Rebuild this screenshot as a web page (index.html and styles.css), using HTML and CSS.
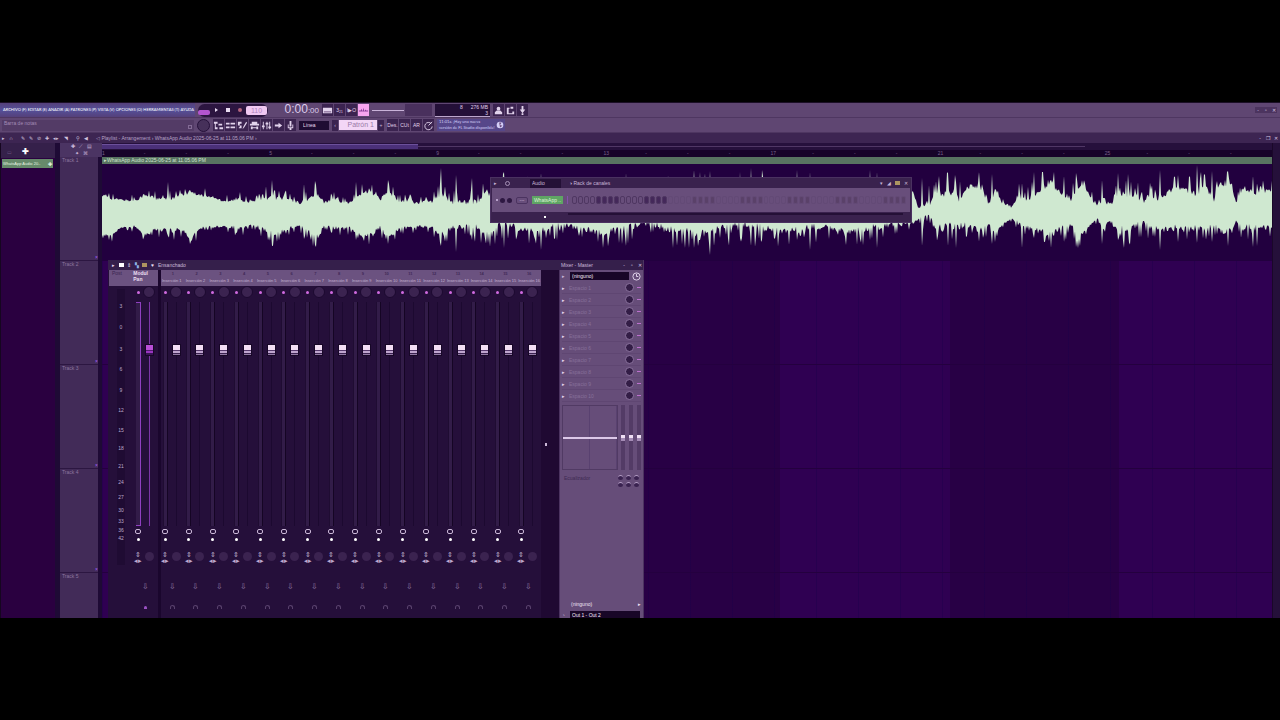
FILE: index.html
```html
<!DOCTYPE html>
<html lang="es">
<head>
<meta charset="UTF-8">
<meta name="viewport" content="width=device-width, initial-scale=1.0">
<title>Playlist - Arrangement</title>
<link rel="stylesheet" href="styles.css">
</head>
<body>

<main class="app">

  <header class="toolbar">
    <div class="bar-row">
      <nav class="menu">
        <a href="#">ARCHIVO (F)</a><a href="#">EDITAR (E)</a><a href="#">AÑADIR (A)</a><a href="#">PATRONES (P)</a><a href="#">VISTA (V)</a><a href="#">OPCIONES (O)</a><a href="#">HERRAMIENTAS (T)</a><a href="#">AYUDA</a>
      </nav>
      <div class="transport">
        <button class="song" aria-label="Song"></button>
        <button aria-label="Play"><svg viewBox="0 0 10 10"><path d="M4 3l3 2-3 2z"/></svg></button>
        <button aria-label="Stop"><svg viewBox="0 0 10 10"><path d="M3 3h4v4H3z"/></svg></button>
        <button class="rec" aria-label="Record"><svg viewBox="0 0 10 10"><circle cx="5" cy="5" r="2"/></svg></button>
        <input class="tempo" aria-label="Tempo" value="110">
      </div>
      <div class="clock"><b>0:00</b><small>:00</small></div>
      <div class="group">
        <button class="icon lit" aria-label="Teclado"><svg viewBox="0 0 12 12"><path d="M1 3h10v6H1z"/><path class="cut" d="M2 7h8v1H2z"/></svg></button>
        <button class="icon">3₂₁</button>
        <button class="icon">I▶O</button>
        <button class="icon pink" aria-label="Metrónomo"><svg viewBox="0 0 12 12"><path d="M1 6h2l1-2 1 3 1-4 1 4 1-2 1 1h2v1H1z"/></svg></button>
      </div>
      <div class="group pitch"><span class="line"></span><span class="box"></span></div>
      <div class="cpu"><span>8</span><span>276 MB<br>3</span></div>
      <div class="group">
        <button class="icon" aria-label="Usuario"><svg viewBox="0 0 12 12"><circle cx="6" cy="4" r="2"/><path d="M2 10V8l2-2h4l2 2v2z"/></svg></button>
        <button class="icon" aria-label="Afinador"><svg viewBox="0 0 12 12"><path d="M2 3h3v1H4v5h4V7h2v3H2zM6 2h3v2H6z"/></svg></button>
        <button class="icon" aria-label="Descarga"><svg viewBox="0 0 12 12"><path d="M5 1h2v4h2L6 9 3 5h2zM5 9h2v2H5z"/></svg></button>
      </div>
      <div class="window-buttons framed"><button aria-label="Minimizar">-</button><button aria-label="Maximizar">▫</button><button aria-label="Cerrar">✕</button></div>
    </div>

    <div class="bar-row second">
      <div class="hint"><span>Barra de notas</span><i></i></div>
      <span class="volume"></span>
      <div class="group">
        <button class="icon" aria-label="Playlist"><svg viewBox="0 0 12 12"><path d="M1 2h4v2H3v4h2v2H2V4H1zM6 4h4v2H6zM7 8h4v2H7z"/></svg></button>
        <button class="icon" aria-label="Rack"><svg viewBox="0 0 12 12"><path d="M1 3h4v2H1zM6 3h5v2H6zM1 7h4v2H1zM6 7h5v2H6z"/></svg></button>
        <button class="icon" aria-label="Piano roll"><svg viewBox="0 0 12 12"><path d="M1 2h4v2H3v2h2v3H2V8h1V6H1zM7 7l3-5 1 1-3 5-2 2z"/></svg></button>
        <button class="icon" aria-label="Navegador"><svg viewBox="0 0 12 12"><path d="M3 2h6v2h2v2H1V4h2zM2 7h2v3H2zM8 7h2v3H8zM4 8h4v1H4z"/></svg></button>
        <button class="icon" aria-label="Mezclador"><svg viewBox="0 0 12 12"><path d="M2 2h1v8H2zM6 2h1v8H6zM9 2h1v8H9zM1 6h3v2H1zM5 3h3v2H5zM8 7h3v2H8z"/></svg></button>
        <button class="icon" aria-label="Siguiente"><svg viewBox="0 0 12 12"><path d="M2 5h4V3l4 3-4 3V7H2z"/></svg></button>
        <button class="icon" aria-label="Micrófono"><svg viewBox="0 0 12 12"><path d="M5 1h2v6H5zM3 5h1v3h4V5h1v4H7v2H5V9H3z"/></svg></button>
      </div>
      <select class="snap" aria-label="Ajuste"><option>Línea</option></select>
      <div class="pattern"><button aria-label="Anterior">‹</button><input aria-label="Patrón" value="Patrón 1"><button aria-label="Nuevo">+</button></div>
      <div class="group">
        <button class="icon">Des.</button>
        <button class="icon">CUt</button>
        <button class="icon">AR</button>
        <button class="icon" aria-label="Tiempo"><svg viewBox="0 0 12 12"><path class="stroke" d="M9 4a4 4 0 1 0 1 3M6 6l4-4"/></svg></button>
      </div>
      <div class="news"><p>11:01a. ¡Hay una nueva<br>versión de FL Studio disponible!</p><svg viewBox="0 0 12 12"><circle cx="6" cy="6" r="4"/><path class="cut" d="M5 3h3L6 6l3 1-3 2z"/></svg></div>
    </div>
  </header>

  <section class="playlist">
    <div class="title-bar">
      <div class="tools">
        <i>▸</i><i>∩</i><i></i><i>✎</i><i>✎</i><i>⊘</i><i>✚</i><i>◂▸</i><i>◥</i><i></i><i>⚲</i><i>◀</i>
      </div>
      <h1>◁ Playlist - Arrangement › WhatsApp Audio 2025-06-25 at 11.05.06 PM ›</h1>
      <div class="window-buttons"><button aria-label="Minimizar">-</button><button aria-label="Restaurar">❐</button><button aria-label="Cerrar">✕</button></div>
    </div>

    <div class="columns">
      <aside class="picker">
        <div class="picker-head"><i>▭</i><b>✚</b></div>
        <button class="clip-item"><span>WhatsApp Audio 20..</span><b>✚</b></button>
      </aside>

      <aside class="track-heads" id="track-heads">
        <div class="head-tools"><b>✚</b><i>⟋</i><i>▤</i><br><i>✦</i><i>⌘</i></div>
      </aside>

      <div class="timeline">
        <div class="scroll-x"><span></span><em></em></div>
        <div class="ruler" id="ruler"></div>
        <div class="audio-clip">
          <div class="clip-title">▸WhatsApp Audio 2025-06-25 at 11.05.06 PM</div>
          <svg class="wave" viewBox="0 0 1170 97" preserveAspectRatio="none"><path id="wave-path"/></svg>
        </div>
        <div class="lanes"><div></div><div></div><div></div><div></div></div>
      </div>
      <div class="scroll-y"></div>
    </div>

    <section class="rack window">
      <div class="rack-title">
        <i>▸</i><i class="ring"></i>
        <select aria-label="Filtro"><option>Audio</option></select>
        <h2>◑ Rack de canales</h2>
        <div class="rack-icons"><i>▾</i><i>◢</i><i class="gold"></i><i>✕</i></div>
      </div>
      <div class="channel">
        <i class="led"></i><i class="mini-knob"></i><i class="mini-knob"></i>
        <button class="route">---</button>
        <button class="channel-name">WhatsApp ..</button>
        <div class="steps" id="steps"></div>
      </div>
      <div class="rack-foot"><i></i><span></span></div>
    </section>

    <section class="mixer window">
      <div class="mixer-title">
        <div class="mixer-icons"><i>▸</i><i class="pages"></i><i>⇕</i><i class="cyan">▚</i><i class="gold"></i><i>♥</i></div>
        <h2>Ensanchado</h2>
        <h2 class="right">Mixer - Master</h2>
        <div class="window-buttons"><button aria-label="Minimizar">-</button><button aria-label="Maximizar">▫</button><button aria-label="Cerrar">✕</button></div>
      </div>
      <div class="mixer-body">
        <div class="master">
          <div class="strip-names"><span>Post</span><b>Modul<br>Pan</b></div>
          <div class="master-strips">
            <div class="scale" id="scale"></div>
            <div class="strip main" id="master-strip"></div>
          </div>
        </div>
        <div class="tracks" id="tracks"></div>
        <div class="gutter"><i></i></div>
        <div class="effects">
          <div class="preset">
            <i>▸</i>
            <select aria-label="Entrada"><option>(ninguno)</option></select>
            <svg viewBox="0 0 10 10"><circle cx="5" cy="5" r="4"/><path d="M5 2v3h2"/></svg>
          </div>
          <div id="slots"></div>
          <div class="eq">
            <div class="eq-graph"><span></span></div>
            <div class="eq-faders"><i></i><i></i><i></i></div>
          </div>
          <div class="eq-label"><span>Ecualizador</span><div class="dots"><i></i><i></i><i></i><i></i><i></i><i></i></div></div>
          <button class="output">(ninguno)<span>▸</span></button>
          <div class="preset out"><i>◔</i><select aria-label="Salida"><option>Out 1 - Out 2</option></select></div>
        </div>
      </div>
    </section>
  </section>
</main>

<script>
const trackCount = 16;

// [x, body top, body bottom, spike reach] along the clip
const envelope = [
  [0, 194, 236, 6], [10, 198, 236, 5], [18, 199, 228, 4], [32, 200, 227, 6], [42, 194, 236, 8],
  [55, 198, 230, 7], [68, 197, 232, 9], [80, 194, 230, 8], [88, 191, 240, 6], [98, 194, 229, 7],
  [112, 197, 228, 6], [122, 200, 227, 7], [138, 198, 230, 9], [147, 202, 226, 4], [160, 197, 229, 9],
  [172, 196, 236, 10], [185, 198, 230, 8], [198, 202, 226, 6], [213, 194, 238, 11], [222, 201, 227, 6],
  [234, 198, 229, 9], [248, 202, 228, 6], [258, 193, 237, 8], [268, 190, 236, 8], [278, 198, 229, 9],
  [286, 191, 238, 8], [298, 200, 230, 8], [315, 202, 227, 7], [330, 200, 228, 8], [339, 193, 237, 12],
  [350, 200, 230, 12], [362, 201, 227, 9], [375, 200, 229, 13], [386, 191, 235, 14], [400, 192, 226, 15],
  [430, 192, 234, 14], [460, 200, 227, 13], [500, 192, 236, 15], [545, 200, 225, 15], [570, 190, 232, 15],
  [600, 192, 236, 16], [640, 198, 226, 15], [680, 192, 234, 16], [720, 198, 228, 14], [750, 192, 234, 15],
  [765, 195, 230, 14], [790, 202, 226, 12], [811, 191, 224, 6], [816, 207, 220, 3], [825, 202, 220, 20],
  [833, 192, 230, 16], [850, 190, 230, 20], [857, 200, 229, 14], [864, 186, 226, 14], [878, 184, 232, 12],
  [888, 202, 226, 16], [893, 187, 236, 8], [900, 202, 225, 4], [910, 206, 219, 6], [917, 192, 226, 12],
  [924, 200, 229, 10], [938, 186, 233, 16], [948, 182, 236, 14], [960, 192, 227, 12], [970, 197, 226, 15],
  [975, 187, 240, 12], [983, 184, 232, 9], [990, 200, 224, 8], [995, 205, 219, 4], [1001, 196, 230, 16],
  [1008, 204, 222, 6], [1018, 192, 232, 18], [1032, 193, 228, 14], [1041, 200, 224, 10], [1048, 194, 228, 12],
  [1056, 200, 230, 8], [1072, 186, 230, 14], [1085, 188, 229, 12], [1096, 193, 230, 16], [1102, 182, 230, 12],
  [1112, 200, 228, 14], [1118, 183, 233, 12], [1130, 184, 232, 12], [1134, 202, 221, 4], [1140, 188, 228, 14],
  [1155, 191, 230, 14], [1164, 188, 229, 12], [1170, 190, 228, 8]
];

// loud hits: x -> [top, bottom]
const hits = {
  7: [193, 240], 66: [182, 236], 88: [190, 244], 170: [180, 246], 202: [184, 239], 213: [181, 245],
  254: [182, 240], 286: [180, 244], 339: [168, 246], 354: [175, 252], 370: [178, 240], 402: [172, 248],
  439: [173, 250], 524: [173, 246], 592: [170, 248], 598: [172, 240], 608: [171, 255], 638: [172, 238],
  649: [168, 246], 660: [170, 240], 695: [170, 240], 708: [172, 250], 768: [170, 240], 775: [172, 248],
  820: [178, 246], 846: [173, 246], 854: [182, 248], 890: [174, 244], 920: [183, 248], 932: [172, 238],
  952: [172, 236], 962: [176, 242], 974: [173, 247], 1000: [180, 244], 1016: [173, 240], 1058: [170, 250],
  1076: [175, 242], 1095: [165, 243], 1110: [171, 242], 1126: [171, 246], 1151: [176, 247]
};

function noise(n) {
  const s = Math.sin(n * 127.1) * 43758.5453;
  return s - Math.floor(s);
}

function drawWave() {
  const top = [];
  const bottom = [];
  let k = 0;
  for (let x = 0; x <= 1170; x++) {
    while (k < envelope.length - 2 && x > envelope[k + 1][0]) k++;
    const a = envelope[k];
    const b = envelope[k + 1];
    const t = (x - a[0]) / (b[0] - a[0]);
    const mix = i => a[i] + (b[i] - a[i]) * t;
    const reach = mix(3);
    // every few samples a peak, the rest stays near the body
    const up = noise(x + 500) > 0.72 ? noise(x + 31) * reach * 1.2 : 0;
    const down = noise(x + 900) > 0.72 ? noise(x + 77) * reach * 1.2 : 0;
    let y1 = Math.max(172, mix(1) + reach * 0.4 - noise(x) * reach * 0.5 - up);
    let y2 = Math.min(248, mix(2) - reach * 0.4 + noise(x + 90) * reach * 0.5 + down);
    if (hits[x]) {
      y1 = hits[x][0];
      y2 = hits[x][1];
    }
    top.push(x + ' ' + (y1 - 164).toFixed(1));
    bottom.unshift(x + ' ' + (y2 - 164).toFixed(1));
  }
  document.getElementById('wave-path').setAttribute('d', 'M' + top.concat(bottom).join('L') + 'Z');
}

function stripHtml(name) {
  return '<i class="lamp"></i><i class="knob"></i>' +
    '<i class="groove"></i><input class="fader" type="range" value="80" aria-label="' + name + '">' +
    '<i class="loop"></i><i class="dot"></i>' +
    '<span class="fx">⇕<br>◂▸</span><i class="knob send"></i>' +
    '<span class="down">⇩</span><i class="arc"></i>';
}

drawWave();

const heads = document.getElementById('track-heads');
for (let i = 1; i <= 5; i++) {
  const cross = i < 5 ? '<i>×</i>' : '';
  heads.insertAdjacentHTML('beforeend', '<div class="track-head">Track ' + i + cross + '</div>');
}

const ruler = document.getElementById('ruler');
for (let i = 0; i < 28; i++) {
  const mark = i % 4 === 0 ? i + 1 : '-';
  ruler.insertAdjacentHTML('beforeend', '<span>' + mark + '</span>');
}

const steps = document.getElementById('steps');
for (let i = 0; i < 56; i++) {
  const step = document.createElement('button');
  step.setAttribute('aria-label', 'Paso ' + (i + 1));
  if (i % 8 > 3) step.classList.add('dark');
  if (i > 15) step.classList.add('off');
  steps.appendChild(step);
}

document.getElementById('master-strip').innerHTML = stripHtml('Master');

const tracks = document.getElementById('tracks');
for (let i = 1; i <= trackCount; i++) {
  tracks.insertAdjacentHTML('beforeend',
    '<div class="track"><div class="track-name"><b>' + i + '</b>Inserción ' + i + '</div>' +
    '<div class="strip">' + stripHtml('Inserción ' + i) + '</div></div>');
}

const scale = document.getElementById('scale');
const marks = [[14, 3], [35, 0], [57, 3], [77, 6], [98, 9], [118, 12], [138, 15], [156, 18], [174, 21],
  [190, 24], [205, 27], [218, 30], [229, 33], [238, 36], [246, 42]];
marks.forEach(function(m) {
  scale.insertAdjacentHTML('beforeend', '<span style="top:' + m[0] + 'px">' + m[1] + '</span>');
});

const slots = document.getElementById('slots');
for (let i = 1; i <= 10; i++) {
  slots.insertAdjacentHTML('beforeend',
    '<div class="slot"><i>▸</i>Espacio ' + i + '<span class="wet"></span><em></em></div>');
}
</script>
</body>
</html>
```
FILE: styles.css
```css
* {
  box-sizing: border-box;
}

body {
  margin: 0;
  min-height: 100vh;
  display: flex;
  align-items: center;
  background: #000;
  color: #c9b6d8;
  font-family: "Liberation Sans", Arial, sans-serif;
  font-size: 5px;
  line-height: 6px;
}

button, input, select {
  margin: 0;
  padding: 0;
  border: none;
  border-radius: 0;
  background: none;
  color: inherit;
  font: inherit;
  appearance: none;
  min-width: 0;
}

a {
  color: inherit;
  text-decoration: none;
}

h1, h2, p {
  margin: 0;
  font-size: 5px;
  font-weight: normal;
}

i, em {
  font-style: normal;
}

svg {
  display: block;
  fill: currentColor;
}

.app {
  width: 100%;
  height: 516px;
  display: flex;
  flex-direction: column;
  overflow: hidden;
  background: #2d0050;
  border-top: 1px solid #1b0f26;
}

/* toolbar */
.toolbar {
  background: #5f4672;
}

.bar-row {
  height: 15px;
  display: flex;
  align-items: center;
  gap: 3px;
  border-bottom: 1px solid #4e3661;
}

.menu {
  width: 195px;
  height: 14px;
  padding: 0 1px 0 3px;
  display: flex;
  justify-content: space-between;
  align-items: center;
  background: linear-gradient(#55407a, #55509a, #55407a);
  color: #fff;
  font-family: Lato, "Liberation Sans", sans-serif;
  font-size: 4px;
  white-space: nowrap;
}

.transport {
  height: 13px;
  width: 70px;
  display: flex;
  align-items: center;
  border-radius: 7px;
  background: #2c1540;
  color: #eadcf2;
}

.transport button {
  width: 12px;
  height: 12px;
}

.transport svg {
  width: 10px;
  height: 10px;
  margin: 0 auto;
}

.transport .song {
  height: 5px;
  margin-top: 5px;
  border-radius: 2px;
  background: #b355cf;
}

.transport .rec {
  color: #b4647e;
}

.tempo {
  width: 21px;
  height: 9px;
  border-radius: 2px;
  background: #f0c8f2;
  color: #b084bd;
  font-size: 7px;
  text-align: center;
}

.clock {
  width: 48px;
  text-align: right;
  color: #dccbea;
  line-height: 12px;
}

.clock b {
  font-size: 12px;
  font-weight: normal;
}

.clock small {
  font-size: 8px;
}

.group {
  display: flex;
  align-items: center;
  gap: 1px;
}

.icon {
  width: 11px;
  height: 12px;
  background: #3b2350;
  color: #e2d3ec;
}

.icon svg {
  width: 11px;
  height: 11px;
}

.icon.pink {
  background: #f7a5f0;
  color: #8b3f9a;
}

.cut {
  fill: #6a4b7c;
}

.stroke {
  fill: none;
  stroke: currentColor;
}

.pitch .line {
  width: 32px;
  height: 1px;
  background: #c9b3d9;
}

.pitch .box {
  width: 27px;
  height: 12px;
  background: #49305d;
}

.cpu {
  width: 55px;
  height: 13px;
  padding: 0 2px;
  display: flex;
  justify-content: flex-end;
  gap: 8px;
  background: #241038;
  border-bottom: 1px solid #bca6cc;
  color: #e0d0ea;
  text-align: right;
}

.window-buttons {
  margin-left: auto;
  display: flex;
  gap: 2px;
}

.window-buttons button {
  width: 6px;
  color: #d7c6e2;
}

.framed {
  margin-right: 3px;
  background: #4c345f;
}

.hint {
  width: 192px;
  height: 11px;
  margin-left: 2px;
  padding: 0 2px;
  display: flex;
  justify-content: space-between;
  background: #533b66;
  color: #a48cb6;
}

.hint i {
  width: 4px;
  height: 4px;
  margin-top: 5px;
  border: 1px solid #836b95;
}

.volume {
  width: 13px;
  height: 13px;
  border-radius: 50%;
  border: 1px solid #25113a;
  background: #46305a;
}

.snap {
  width: 30px;
  height: 9px;
  padding: 0 4px;
  background: #1f0c33;
  color: #e9dcf1;
}

.pattern {
  display: flex;
  gap: 1px;
}

.pattern button {
  width: 6px;
  height: 11px;
  background: #3b2350;
}

.pattern input {
  width: 38px;
  height: 10px;
  padding-right: 3px;
  background: #f3d6f6;
  color: #9a7ba8;
  font-size: 7px;
  text-align: right;
}

.news {
  display: flex;
  align-items: center;
  padding-left: 2px;
  background: #56478a;
  color: #d4cff8;
  font-family: Lato, "Liberation Sans", sans-serif;
}

.news p {
  font-size: 4px;
  line-height: 6px;
  white-space: nowrap;
}

.news svg {
  width: 10px;
  height: 10px;
}

/* playlist */
.playlist {
  position: relative;
  flex: 1;
  min-height: 0;
  display: flex;
  flex-direction: column;
}

.title-bar {
  height: 10px;
  display: flex;
  align-items: center;
  gap: 8px;
  background: #3d2552;
  color: #b7a2c7;
}

.tools {
  width: 88px;
  padding-left: 2px;
  display: flex;
  justify-content: space-between;
  color: #d2c2dd;
}

.title-bar .window-buttons {
  padding-right: 1px;
}

.columns {
  flex: 1;
  min-height: 0;
  display: flex;
  overflow: hidden;
}

.picker {
  width: 55px;
  background: #2a0040;
  border-left: 1px solid #160620;
}

.picker-head {
  height: 15px;
  padding: 6px 6px 0;
  display: flex;
  gap: 10px;
  background: #35204a;
}

.picker-head b {
  color: #fff;
  font-size: 8px;
}

.picker-head i {
  color: #6c5480;
}

.clip-item {
  width: 51px;
  height: 9px;
  margin: 1px;
  padding: 0 1px;
  display: flex;
  justify-content: space-between;
  align-items: center;
  background: #668a6b;
  color: #e3f2e0;
  white-space: nowrap;
}

.clip-item span {
  font-size: 4px;
}

.track-heads {
  width: 47px;
  padding-left: 5px;
  background: #1e0a35;
}

.head-tools {
  width: 42px;
  height: 14px;
  padding: 0 8px;
  background: #4b3463;
  text-align: center;
  line-height: 7px;
}

.head-tools i, .head-tools b {
  padding: 0 2px;
}

.track-head {
  position: relative;
  width: 38px;
  height: 104px;
  padding: 0 2px;
  background: #422b58;
  border-bottom: 1px solid #2c1641;
  color: #8d769f;
}

.track-head i {
  position: absolute;
  right: 0;
  bottom: 0;
  color: #a35cf0;
}

.timeline {
  flex: 1;
  min-width: 0;
  display: flex;
  flex-direction: column;
}

.scroll-x {
  height: 7px;
  display: flex;
  align-items: center;
  background: #26103c;
}

.scroll-x span {
  width: 27%;
  height: 5px;
  background: #4b3079;
  border-top: 1px solid #6c509b;
}

.scroll-x em {
  width: 57%;
  height: 1px;
  background: #503765;
}

.ruler {
  height: 7px;
  display: flex;
  background: #170329;
  color: #77608b;
}

.ruler span {
  flex: 1;
}

.audio-clip {
  height: 104px;
  flex-shrink: 0;
  background: #22003f;
}

.clip-title {
  height: 7px;
  padding-left: 2px;
  background: #587361;
  color: #cfe3cf;
}

.wave {
  width: 100%;
  height: 97px;
  fill: #cfe8d0;
}

.lanes {
  flex: 1;
  min-height: 0;
  background:
    repeating-linear-gradient(90deg, rgba(24, 0, 74, 0.35) 0 1px, transparent 1px 42px),
    repeating-linear-gradient(90deg, #2f0052 0 170px, #280045 170px 339px);
}

.lanes div {
  height: 104px;
  border-bottom: 1px solid #24003f;
}

.scroll-y {
  width: 8px;
  background: #25103a;
  border-left: 1px solid #1a0829;
}

.window {
  position: absolute;
  overflow: hidden;
}

/* channel rack */
.rack {
  left: 490px;
  top: 44px;
  width: 422px;
  height: 46px;
  background: #3a224e;
  border: 1px solid #4a3160;
}

.rack-title {
  height: 10px;
  display: flex;
  align-items: center;
  gap: 8px;
  padding-left: 3px;
}

.ring {
  width: 5px;
  height: 5px;
  border: 1px solid #a58fb5;
  border-radius: 50%;
}

.rack-title select {
  width: 31px;
  height: 9px;
  margin-left: 12px;
  padding-left: 2px;
  background: #241036;
}

.rack-icons {
  margin-left: auto;
  padding-right: 3px;
  display: flex;
  align-items: center;
  gap: 4px;
}

.gold {
  width: 5px;
  height: 4px;
  background: #ad9560;
}

.channel {
  height: 24px;
  margin: 0 1px;
  padding: 0 4px;
  display: flex;
  align-items: center;
  gap: 2px;
  background: #684e7b;
}

.led {
  width: 2px;
  height: 2px;
  background: #b79fc8;
}

.mini-knob {
  width: 5px;
  height: 5px;
  border-radius: 50%;
  background: #2e1842;
}

.route {
  width: 12px;
  height: 7px;
  margin: 0 2px;
  border: 1px solid #4b3360;
  border-radius: 2px;
  line-height: 4px;
}

.channel-name {
  width: 31px;
  height: 8px;
  background: #5fa564;
  color: #dff5da;
  white-space: nowrap;
}

.steps {
  flex: 1;
  display: flex;
  gap: 1px;
  padding-left: 4px;
  margin-left: 2px;
  border-left: 1px solid #8650ab;
}

.steps button {
  flex: 1;
  height: 8px;
  border-radius: 2px;
  border: 1px solid #4f3762;
}

.steps .dark {
  background: #44285a;
}

.steps .off {
  border-color: #634a76;
}

.steps .off.dark {
  background: #5a4169;
}

.rack-foot {
  display: flex;
  align-items: center;
  gap: 22px;
  height: 10px;
  padding: 0 8px 0 53px;
}

.rack-foot i {
  width: 2px;
  height: 2px;
  background: #fff;
}

.rack-foot span {
  flex: 1;
  height: 2px;
  margin-bottom: 6px;
  background: #241036;
}

/* mixer */
.mixer {
  left: 108px;
  top: 127px;
  bottom: 0;
  width: 536px;
  display: flex;
  flex-direction: column;
  background: #250f3a;
  border-right: 1px solid #4b3360;
}

.mixer-title {
  height: 10px;
  display: flex;
  align-items: center;
  background: #351f4b;
  color: #e8dcf0;
}

.mixer-title h2 {
  color: #cbb9d9;
}

.mixer-icons {
  width: 50px;
  padding: 0 4px;
  display: flex;
  align-items: center;
  justify-content: space-between;
}

.pages {
  width: 5px;
  height: 4px;
  background: #fff;
}

.cyan {
  color: #8fb7e8;
}

.mixer-title .right {
  width: 60px;
  margin-left: auto;
}

.mixer-title .window-buttons {
  margin: 0;
}

.mixer-body {
  flex: 1;
  min-height: 0;
  display: flex;
}

.master {
  width: 53px;
  padding-left: 1px;
  border-right: 3px solid #1a062d;
}

.strip-names {
  height: 16px;
  padding: 0 10px 0 3px;
  display: flex;
  justify-content: space-between;
  background: #6b5280;
  color: #eadff1;
}

.strip-names span {
  color: #3c2551;
}

.master-strips {
  display: flex;
}

.scale {
  width: 8px;
  height: 276px;
  margin: 3px 9px 0 8px;
  position: relative;
  background: #1f0b33;
  text-align: center;
}

.scale span {
  position: absolute;
  left: 0;
  width: 8px;
  color: #bda9cc;
}

.tracks {
  flex: 1;
  display: flex;
}

.track {
  flex: 1;
  min-width: 0;
}

.track-name {
  height: 16px;
  padding: 1px;
  background: #6b5280;
  color: #c6b3d4;
  font-size: 4px;
  white-space: nowrap;
}

.track-name b {
  display: block;
  height: 7px;
  color: #412957;
  text-align: center;
}

.strip {
  display: grid;
  grid-template-columns: 8px 14px;
  grid-template-rows: 12px 4px 224px 10px 6px 22px 12px 21px 20px;
  justify-items: center;
  align-items: center;
  width: 22px;
}

.lamp {
  width: 3px;
  height: 3px;
  border-radius: 50%;
  background: #d06ae0;
}

.knob {
  width: 12px;
  height: 12px;
  border-radius: 50%;
  background: #3b2350;
  border: 1px solid #1c0930;
}

.groove {
  grid-row: 3;
  width: 5px;
  height: 224px;
  background: #321c48;
  border-right: 1px solid #150524;
  border-left: 1px solid #1f0c32;
}

.fader {
  grid-row: 3;
  width: 9px;
  height: 224px;
  writing-mode: vertical-lr;
  direction: rtl;
  background: linear-gradient(90deg, transparent 4px, #1c0930 4px, #1c0930 5px, transparent 5px);
}

.fader::-webkit-slider-thumb {
  appearance: none;
  width: 9px;
  height: 12px;
  border: 1px solid #170727;
  background: linear-gradient(#f3def5 0 5px, #55386c 5px 6px, #bfa5cf 6px 8px, #3a2250 8px 9px, #937aa5 9px);
}

.loop {
  grid-row: 4;
  width: 6px;
  height: 5px;
  border: 1px solid #cbb8d8;
  border-radius: 2px;
}

.dot {
  grid-row: 5;
  width: 3px;
  height: 3px;
  border-radius: 50%;
  background: #fff;
}

.fx {
  grid-row: 6;
  align-self: end;
  color: #bfaace;
  font-size: 7px;
  line-height: 6px;
  text-align: center;
}

.strip .send {
  grid-row: 6;
  align-self: end;
  width: 9px;
  height: 9px;
  margin-bottom: 3px;
  border: none;
}

.down {
  grid-row: 8;
  grid-column: 1 / 3;
  color: #8f7aa3;
  font-size: 8px;
}

.arc {
  grid-row: 9;
  grid-column: 1 / 3;
  width: 5px;
  height: 4px;
  border: 1px solid #59426d;
  border-bottom: none;
  border-radius: 3px 3px 0 0;
}

.main .groove {
  border: 1px solid #9040c0;
  border-left: none;
}

.main .fader {
  background: linear-gradient(90deg, transparent 4px, #7b35a6 4px, #7b35a6 5px, transparent 5px);
}

.main .fader::-webkit-slider-thumb {
  background: linear-gradient(#b84fd6 0 5px, #521a70 5px 6px, #9a35c0 6px 8px, #3a1455 8px);
}

.main .arc {
  height: 3px;
  width: 3px;
  border: none;
  background: #9b51c4;
}

.gutter {
  width: 18px;
  display: flex;
  align-items: center;
  padding-left: 4px;
  background: #1f0932;
}

.gutter i {
  width: 2px;
  height: 3px;
  background: #cbb8d8;
}

.effects {
  width: 84px;
  padding: 0 2px;
  display: flex;
  flex-direction: column;
  background: #664d79;
  border-left: 1px solid #4b3360;
}

.preset {
  height: 12px;
  display: flex;
  align-items: center;
  gap: 3px;
}

.preset i {
  width: 5px;
}

.preset select {
  width: 59px;
  height: 8px;
  padding-left: 2px;
  background: #180627;
  color: #f5ecfa;
}

.preset svg {
  width: 9px;
  height: 9px;
  fill: none;
  stroke: #eadcf3;
}

.slot {
  height: 12px;
  display: flex;
  align-items: center;
  gap: 3px;
  border-bottom: 1px solid #5f4672;
  color: #87709a;
}

.slot i {
  width: 4px;
  color: #e5d8ee;
}

.slot .wet {
  width: 9px;
  height: 9px;
  margin-left: auto;
  border: 1px solid #8b739e;
  border-radius: 50%;
  background: #331d46;
}

.slot em {
  width: 4px;
  height: 1px;
  background: #bd70cf;
}

.eq {
  display: flex;
  gap: 3px;
  margin-top: 3px;
}

.eq-graph {
  width: 56px;
  height: 65px;
  display: flex;
  align-items: center;
  border: 1px solid #513a64;
  background: repeating-linear-gradient(90deg, transparent 0 26px, #594170 26px 27px);
}

.eq-graph span {
  width: 100%;
  height: 2px;
  background: #dcc8e8;
}

.eq-faders {
  display: flex;
  gap: 4px;
}

.eq-faders i {
  width: 4px;
  background: linear-gradient(#533b66 0 30px, #efdff4 30px 33px, #a58cb6 33px 36px, #533b66 36px);
}

.eq-label {
  display: flex;
  justify-content: space-between;
  margin-top: 5px;
  padding: 0 2px;
  color: #3f2a53;
}

.dots {
  display: grid;
  grid-template-columns: 5px 5px 5px;
  gap: 2px 3px;
}

.dots i {
  height: 5px;
  border-radius: 50%;
  background: #3a2250;
  border-top: 1px solid #b39cc3;
}

.output {
  height: 8px;
  margin: auto 0 2px;
  padding-left: 9px;
  display: flex;
  justify-content: space-between;
  color: #efe3f5;
}

.out {
  height: 7px;
}

.out select {
  width: 70px;
  height: 7px;
}
```
